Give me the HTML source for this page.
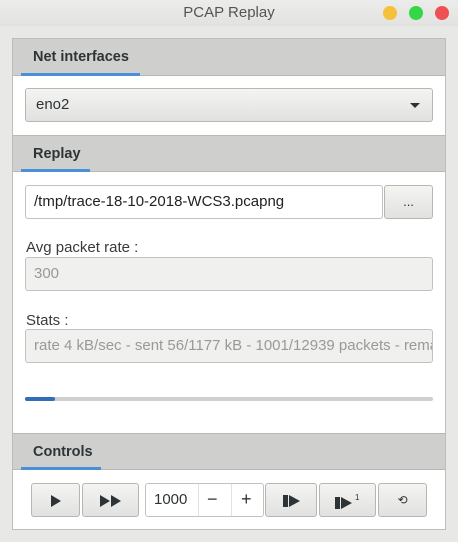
<!DOCTYPE html>
<html><head><style>
*{box-sizing:border-box;margin:0;padding:0}
body{width:458px;height:542px;background:#e8e8e7;font-family:"Liberation Sans","DejaVu Sans",sans-serif;position:relative;overflow:hidden;color:#2e3436}
.a{position:absolute}
.title{left:0;top:0;width:458px;height:26px;background:linear-gradient(#ececeb,#e2e2e1);text-align:center;font-size:15px;line-height:26px;color:#555}
.dot{width:14px;height:14px;border-radius:50%;top:6px}
.panel{left:12px;top:38px;width:434px;height:492px;border:1px solid #bdbdbb;background:#fff}
.hdr{left:0;width:432px;height:37px;background:#cfcfcd;border-bottom:1px solid #b8b8b6;font-weight:bold;font-size:14.5px;line-height:36px;padding-left:20px}
.ul{height:3px;background:#4a90d9;bottom:-1px;left:8px}
.btn{border:1px solid #b6b6b3;border-radius:3px;background:linear-gradient(#f4f4f3,#e1e1df);text-align:center;font-size:13px}
.inp{border:1px solid #c2c2c0;border-radius:3px;font-size:15px;padding-left:8px;line-height:31px}
.lbl{font-size:15px;color:#3a3a3a}
.ic{display:inline-block;vertical-align:middle}
</style></head><body>
<div class="a title">PCAP Replay</div>
<div class="a dot" style="left:383px;background:#f6c13a"></div>
<div class="a dot" style="left:409px;background:#35d647"></div>
<div class="a dot" style="left:435px;background:#ef5053"></div>
<div class="a panel">
 <div class="a hdr" style="top:0">Net interfaces<div class="a ul" style="width:119px"></div></div>
 <div class="a btn" style="left:12px;top:49px;width:408px;height:34px;text-align:left;padding-left:10px;font-size:15px;line-height:32px">eno2
  <div class="a" style="right:12px;top:14px;width:0;height:0;border-left:5px solid transparent;border-right:5px solid transparent;border-top:5px solid #2e3436"></div></div>
 <div class="a hdr" style="top:96px;border-top:1px solid #b8b8b6">Replay<div class="a ul" style="width:69px"></div></div>
 <div class="a inp" style="left:12px;top:146px;width:358px;height:34px;color:#222">/tmp/trace-18-10-2018-WCS3.pcapng</div>
 <div class="a btn" style="left:371px;top:146px;width:49px;height:34px;line-height:32px">...</div>
 <div class="a lbl" style="left:13px;top:200px">Avg packet rate :</div>
 <div class="a inp" style="left:12px;top:218px;width:408px;height:34px;background:#f0f0ef;color:#999">300</div>
 <div class="a lbl" style="left:13px;top:273px">Stats :</div>
 <div class="a inp" style="left:12px;top:290px;width:408px;height:34px;background:#f0f0ef;color:#999;overflow:hidden;white-space:nowrap">rate 4 kB/sec - sent 56/1177 kB - 1001/12939 packets - remaining</div>
 <div class="a" style="left:12px;top:358px;width:408px;height:4px;background:#cfcfcd;border-radius:2px"></div>
 <div class="a" style="left:12px;top:358px;width:30px;height:4px;background:#2f6fb5;border-radius:2px"></div>
 <div class="a hdr" style="top:394px;border-top:1px solid #b8b8b6">Controls<div class="a ul" style="width:80px"></div></div>
 <div class="a btn" style="left:18px;top:444px;width:49px;height:34px;line-height:32px"><svg class="ic" width="10" height="12"><path d="M0 0L10 6L0 12Z" fill="#2e3436"/></svg></div>
 <div class="a btn" style="left:69px;top:444px;width:57px;height:34px;line-height:32px"><svg class="ic" width="22" height="12"><path d="M0 0L10 6L0 12ZM11 0L21 6L11 12Z" fill="#2e3436"/></svg></div>
 <div class="a inp" style="left:132px;top:444px;width:119px;height:34px;padding:0;background:#fff">
  <span class="a" style="left:8px;top:0">1000</span>
  <div class="a" style="left:52px;top:0;width:1px;height:32px;background:#e3e3e1"></div>
  <span class="a" style="left:61px;top:0;font-size:18px">&minus;</span>
  <div class="a" style="left:85px;top:0;width:1px;height:32px;background:#e3e3e1"></div>
  <span class="a" style="left:95px;top:0;font-size:18px">+</span></div>
 <div class="a btn" style="left:252px;top:444px;width:52px;height:34px;line-height:32px"><svg class="ic" width="17" height="12"><path d="M0 0H5V12H0ZM6 0L17 6L6 12Z" fill="#2e3436"/></svg></div>
 <div class="a btn" style="left:306px;top:444px;width:57px;height:34px;line-height:32px"><svg class="ic" width="26" height="16"><path d="M0 4H5V16H0ZM6 4L17 10L6 16Z" fill="#2e3436"/><text x="20" y="7" font-size="8" fill="#2e3436" font-family="Liberation Sans">1</text></svg></div>
 <div class="a btn" style="left:365px;top:444px;width:49px;height:34px;line-height:32px;font-size:12px">&#10226;</div>
</div>
</body></html>
